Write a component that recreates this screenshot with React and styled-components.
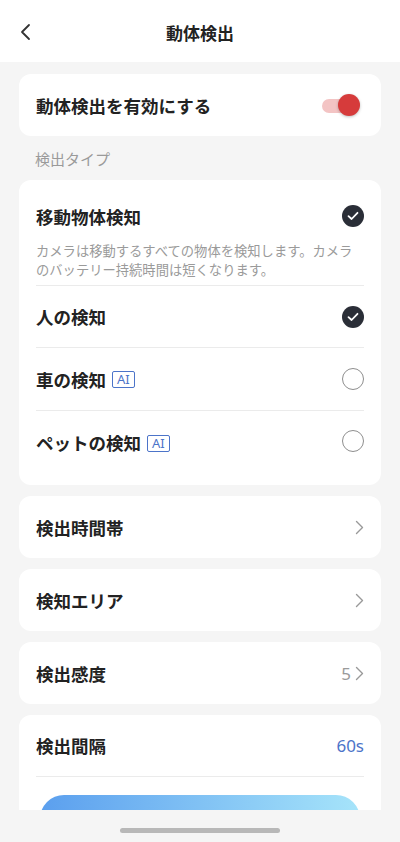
import styled, { createGlobalStyle } from "styled-components";

const GlobalStyle = createGlobalStyle`
  html, body {
    margin: 0;
    padding: 0;
    background: #f5f5f5;
    font-family: "Noto Sans CJK JP", "Noto Sans", sans-serif;
  }
`;

const Screen = styled.div`
  width: 400px;
  height: 842px;
  display: flex;
  flex-direction: column;
  background: #f5f5f5;
  overflow: hidden;
`;

const Header = styled.div`
  height: 62px;
  flex-shrink: 0;
  background: #fff;
  display: flex;
  align-items: center;
  justify-content: center;
  position: relative;
`;

const Back = styled.div`
  position: absolute;
  left: 18px;
  top: 22px;
  width: 16px;
  height: 20px;
  color: #333;
`;

const Title = styled.div`
  font-size: 17px;
  font-weight: 700;
  color: #222;
  margin-top: 2px;
`;

const Content = styled.div`
  flex: 1;
  overflow: hidden;
  padding: 12px 19px 0;
  display: flex;
  flex-direction: column;
  gap: 11px;
`;

const Card = styled.div`
  background: #fff;
  border-radius: 12px;
  padding: 0 17px;
  flex-shrink: 0;
`;

const Row = styled.div`
  height: ${(p) => p.h || 62}px;
  display: flex;
  align-items: ${(p) => (p.last ? "flex-start" : "center")};
  padding-top: ${(p) => (p.last ? "19px" : "0")};
  box-sizing: border-box;
  justify-content: space-between;
  border-bottom: ${(p) => (p.line ? "1px solid #ebebeb" : "none")};
`;

const Label = styled.div`
  font-size: 17.5px;
  font-weight: ${(p) => p.weight || 700};
  color: #222;
  display: flex;
  align-items: center;
  gap: 6px;
`;

const SectionTitle = styled.div`
  font-size: 15px;
  color: #9a9a9a;
  padding: 1px 16px 0;
  margin: 0 0 -1px;
  height: 22px;
  line-height: 22px;
`;

const Toggle = styled.div`
  width: 38px;
  height: 22px;
  position: relative;
  margin-right: 4px;
  &::before {
    content: "";
    position: absolute;
    left: 0;
    top: 5px;
    width: 34px;
    height: 14px;
    border-radius: 7px;
    background: #f3c4c4;
  }
  &::after {
    content: "";
    position: absolute;
    right: 0;
    top: 0;
    width: 22px;
    height: 22px;
    border-radius: 50%;
    background: #d63b3b;
    box-shadow: 0 1px 3px rgba(0, 0, 0, 0.25);
  }
`;

const Radio = styled.div`
  width: 22px;
  height: 22px;
  border-radius: 50%;
  box-sizing: border-box;
  flex-shrink: 0;
  background: ${(p) => (p.on ? "#2a2e37" : "#fff")};
  border: ${(p) => (p.on ? "none" : "1px solid #8e8e8e")};
  display: flex;
  align-items: center;
  justify-content: center;
`;

const Desc = styled.div`
  font-size: 13.3px;
  line-height: 19px;
  color: #9a9a9a;
  padding: 0 6px 6px 0;
`;

const TopBlock = styled.div`
  border-bottom: 1px solid #ebebeb;
  padding-top: 22px;
`;

const TopLine = styled.div`
  display: flex;
  align-items: center;
  justify-content: space-between;
  height: 28px;
  margin-bottom: 11px;
`;

const Badge = styled.span`
  font-family: "Noto Sans", sans-serif;
  font-size: 13px;
  font-weight: 400;
  color: #4c74c9;
  border: 1px solid #4c74c9;
  border-radius: 2px;
  height: 15px;
  line-height: 15px;
  padding: 0 4px;
  margin-top: 1px;
`;

const Right = styled.div`
  display: flex;
  align-items: center;
  gap: 4px;
  font-family: "Noto Sans", sans-serif;
  font-size: 17px;
  color: ${(p) => p.color || "#9a9a9a"};
`;

const Gradient = styled.div`
  height: 48px;
  margin: 18px 4px 0;
  border-radius: 24px;
  background: linear-gradient(90deg, #5b9fee, #a6e4fa);
`;

const Bottom = styled.div`
  height: 32px;
  flex-shrink: 0;
  background: #f5f5f5;
  display: flex;
  justify-content: center;
  padding-top: 18px;
  box-sizing: border-box;
`;

const Indicator = styled.div`
  width: 160px;
  height: 5px;
  border-radius: 3px;
  background: #b8b8b8;
`;

const Chevron = () => (
  <svg width="9" height="15" viewBox="0 0 9 15">
    <path d="M1.5 1.5 L7.5 7.5 L1.5 13.5" fill="none" stroke="#999" strokeWidth="1.4" strokeLinecap="round" strokeLinejoin="round" />
  </svg>
);

const Check = ({ on }) => (
  <Radio on={on}>
    {on && (
      <svg width="12" height="10" viewBox="0 0 12 10">
        <path d="M1.5 5.2 L4.6 8 L10.5 1.8" fill="none" stroke="#fff" strokeWidth="1.8" strokeLinecap="round" strokeLinejoin="round" />
      </svg>
    )}
  </Radio>
);

export default function App() {
  return (
    <Screen>
      <GlobalStyle />
      <Header>
        <Back>
          <svg width="16" height="20" viewBox="0 0 16 20">
            <path d="M11 3 L4 10 L11 17" fill="none" stroke="#333" strokeWidth="1.8" strokeLinecap="round" strokeLinejoin="round" />
          </svg>
        </Back>
        <Title>動体検出</Title>
      </Header>
      <Content>
        <Card>
          <Row>
            <Label weight={600}>動体検出を有効にする</Label>
            <Toggle />
          </Row>
        </Card>
        <SectionTitle>検出タイプ</SectionTitle>
        <Card>
          <TopBlock>
            <TopLine>
              <Label>移動物体検知</Label>
              <Check on />
            </TopLine>
            <Desc>
              カメラは移動するすべての物体を検知します。カメラのバッテリー持続時間は短くなります。
            </Desc>
          </TopBlock>
          <Row line>
            <Label>人の検知</Label>
            <Check on />
          </Row>
          <Row line h={63}>
            <Label>
              車の検知<Badge>AI</Badge>
            </Label>
            <Check />
          </Row>
          <Row last h={74}>
            <Label>
              ペットの検知<Badge>AI</Badge>
            </Label>
            <Check />
          </Row>
        </Card>
        <Card>
          <Row>
            <Label>検出時間帯</Label>
            <Right>
              <Chevron />
            </Right>
          </Row>
        </Card>
        <Card>
          <Row>
            <Label>検知エリア</Label>
            <Right>
              <Chevron />
            </Right>
          </Row>
        </Card>
        <Card>
          <Row>
            <Label>検出感度</Label>
            <Right>
              5 <Chevron />
            </Right>
          </Row>
        </Card>
        <Card>
          <Row line>
            <Label>検出間隔</Label>
            <Right color="#4c74c9">60s</Right>
          </Row>
          <Gradient />
        </Card>
      </Content>
      <Bottom>
        <Indicator />
      </Bottom>
    </Screen>
  );
}
